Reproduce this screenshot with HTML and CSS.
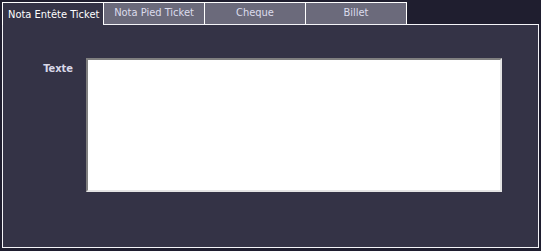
FILE: index.html
```html
<!DOCTYPE html>
<html>
<head>
<meta charset="utf-8">
<title>Nota</title>
<link rel="stylesheet" href="styles.css">
</head>
<body>
<div class="wrap">
	<div class="tabs">
		<div class="tab active">Nota Entête Ticket</div>
		<div class="tab">Nota Pied Ticket</div>
		<div class="tab">Cheque</div>
		<div class="tab last">Billet</div>
	</div>
	<div class="panel">
		<div class="row">
			<label class="lbl">Texte</label>
			<textarea class="txt"></textarea>
		</div>
	</div>
</div>
</body>
</html>
```

FILE: styles.css
```css
body{ margin:0; background:#1f1e2f; font-family:"DejaVu Sans Condensed","DejaVu Sans",sans-serif; font-size:11px;}
.wrap{ padding:2px 0 0 2px; width:537px;}
.tabs{ display:flex; height:22px; align-items:flex-start;}
.tab{ width:101px; box-sizing:border-box; border:1px solid #fff; border-bottom:none; border-right:none; background:#6b6a7b; color:#dcdcec; text-align:center; line-height:20px; height:22px; white-space:nowrap;}
.tab.last{ border-right:1px solid #fff; width:102px;}
.tab.active{ width:101px; background:#343346; color:#fff; height:23px; position:relative; z-index:1; line-height:24px; border-right:none; text-align:left; padding-left:5px;}
.panel{ height:224px; box-sizing:border-box; border:1px solid #f4f4f8; background:#343346; padding-top:33px;}
.row{ display:flex; align-items:flex-start;}
.lbl{ width:70px; text-align:right; font-weight:bold; color:#d8d8e8; margin-right:13px; padding-top:4px;}
.txt{ width:416px; height:134px; box-sizing:border-box; margin:0; padding:0; resize:none; background:#fff; border-style:solid; border-width:2px; border-color:#808080 #e4e4e4 #e4e4e4 #808080; outline:none;}
```
